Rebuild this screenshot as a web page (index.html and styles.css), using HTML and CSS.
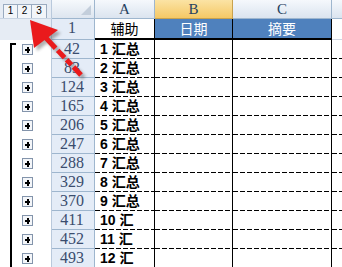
FILE: index.html
```html
<!DOCTYPE html>
<html>
<head>
<meta charset="utf-8">
<link rel="stylesheet" href="styles.css">
</head>
<body>
<div class="sheet">
  <div class="c outline-head">
    <div class="levels"><span class="lv">1</span><span class="lv">2</span><span class="lv">3</span></div>
  </div>
  <div class="c corner"><span class="tri"></span></div>
  <div class="c colhead">A</div>
  <div class="c colhead sel">B</div>
  <div class="c colhead">C</div>
  <div class="c colhead end"></div>

  <div class="c outline-gap"></div>
  <div class="c rowhead">1</div>
  <div class="c title">辅助</div>
  <div class="c title blue">日期</div>
  <div class="c title blue lastcol">摘要</div>
  <div class="c title plain"></div>

  <div class="outline">
    <div class="bracket"></div>
    <div class="btns">
      <span class="slot"><span class="plus"></span></span><span class="slot"><span class="plus"></span></span>
      <span class="slot"><span class="plus"></span></span><span class="slot"><span class="plus"></span></span>
      <span class="slot"><span class="plus"></span></span><span class="slot"><span class="plus"></span></span>
      <span class="slot"><span class="plus"></span></span><span class="slot"><span class="plus"></span></span>
      <span class="slot"><span class="plus"></span></span><span class="slot"><span class="plus"></span></span>
      <span class="slot"><span class="plus"></span></span><span class="slot"><span class="plus"></span></span>
    </div>
  </div>

  <div class="c rowhead">42</div><div class="c cell a">1 汇总</div><div class="c cell b"></div><div class="c cell cc"></div><div class="c cell d"></div>
  <div class="c rowhead">83</div><div class="c cell a">2 汇总</div><div class="c cell b"></div><div class="c cell cc"></div><div class="c cell d"></div>
  <div class="c rowhead">124</div><div class="c cell a">3 汇总</div><div class="c cell b"></div><div class="c cell cc"></div><div class="c cell d"></div>
  <div class="c rowhead">165</div><div class="c cell a">4 汇总</div><div class="c cell b"></div><div class="c cell cc"></div><div class="c cell d"></div>
  <div class="c rowhead">206</div><div class="c cell a">5 汇总</div><div class="c cell b"></div><div class="c cell cc"></div><div class="c cell d"></div>
  <div class="c rowhead">247</div><div class="c cell a">6 汇总</div><div class="c cell b"></div><div class="c cell cc"></div><div class="c cell d"></div>
  <div class="c rowhead">288</div><div class="c cell a">7 汇总</div><div class="c cell b"></div><div class="c cell cc"></div><div class="c cell d"></div>
  <div class="c rowhead">329</div><div class="c cell a">8 汇总</div><div class="c cell b"></div><div class="c cell cc"></div><div class="c cell d"></div>
  <div class="c rowhead">370</div><div class="c cell a">9 汇总</div><div class="c cell b"></div><div class="c cell cc"></div><div class="c cell d"></div>
  <div class="c rowhead">411</div><div class="c cell a">10 汇</div><div class="c cell b"></div><div class="c cell cc"></div><div class="c cell d"></div>
  <div class="c rowhead">452</div><div class="c cell a">11 汇</div><div class="c cell b"></div><div class="c cell cc"></div><div class="c cell d"></div>
  <div class="c rowhead">493</div><div class="c cell a">12 汇</div><div class="c cell b"></div><div class="c cell cc"></div><div class="c cell d"></div>

  <svg class="arrow" width="342" height="267" viewBox="0 0 342 267">
    <defs>
      <filter id="sh" x="-20%" y="-20%" width="140%" height="140%">
        <feGaussianBlur stdDeviation="1.5"/>
      </filter>
    </defs>
    <g transform="translate(3,3)" opacity="0.45" filter="url(#sh)">
      <polygon points="30,20 34,48 58,30" fill="#555"/>
      <line x1="46" y1="38" x2="81" y2="75" stroke="#555" stroke-width="5" stroke-dasharray="14 3 10 3 7 3"/>
    </g>
    <line x1="46" y1="38" x2="81" y2="75" stroke="#ea1a1c" stroke-width="5" stroke-dasharray="14 3 10 3 7 3"/>
    <polygon points="30,20 34,48 58,30" fill="#ea1a1c"/>
  </svg>
</div>
</body>
</html>
```
FILE: styles.css
```css
* { box-sizing: border-box; }
html, body { margin: 0; padding: 0; background: #fff; }
body { width: 342px; height: 267px; overflow: hidden; }

.sheet {
  position: relative;
  display: grid;
  grid-template-columns: 52px 43px 60px 78px 99px 1fr;
  grid-template-rows: 19px 21px repeat(12, 19px);
  width: 342px;
  height: 267px;
  overflow: hidden;
}

.c { overflow: hidden; white-space: nowrap; }

.outline-head {
  background: #e6ecf4;
  border-right: 1px solid #b9c9dc;
  border-bottom: 1px solid #c8d4e3;
  display: flex;
  align-items: flex-start;
  padding: 4px 0 0 3px;
}
.levels { display: flex; border: 1px solid #9aabc0; background: #f2f5f9; }
.lv {
  width: 14px; height: 13px;
  font: 10px/12px "Liberation Sans", sans-serif;
  color: #000;
  text-align: center;
  border-right: 1px solid #9aabc0;
}
.lv:last-child { border-right: none; }

.corner {
  background: linear-gradient(#f6f9fc, #dde5ef);
  border-right: 1px solid #9eb6ce;
  border-bottom: 1px solid #9eb6ce;
  display: flex;
  justify-content: flex-end;
  align-items: flex-end;
  padding: 0 3px 3px 0;
}
.tri {
  width: 0; height: 0;
  border-left: 10px solid transparent;
  border-bottom: 10px solid #c3cedb;
}

.colhead {
  background: linear-gradient(#f5f8fc, #dbe4ef);
  border-right: 1px solid #9eb6ce;
  border-bottom: 1px solid #9eb6ce;
  font: 15px/18px "Liberation Serif", serif;
  color: #27415f;
  text-align: center;
}
.colhead.sel {
  background: linear-gradient(#fbe3a4, #f5c865);
  border-right-color: #c9a24d;
  border-bottom-color: #c9a24d;
}
.colhead.end { border-right: none; }

.outline-gap {
  background: #e6ecf4;
  border-right: 1px solid #b9c9dc;
}

.rowhead {
  background: #e4ecf7;
  border-right: 1px solid #9eb6ce;
  border-bottom: 1px solid #9eb6ce;
  font: 16px/18px "Liberation Serif", serif;
  color: #3a4d6e;
  text-align: center;
  padding-right: 2px;
}

.title {
  font: 14px/19px "Noto Sans CJK SC", sans-serif;
  color: #000;
  text-align: center;
  border-bottom: 2px solid #000;
  border-right: 1px solid #000;
}
.title.blue { background: #4f81bd; color: #fff; }
.title.plain { border-right: none; border-bottom: 1px solid #d0d7e5; }

.outline {
  grid-column: 1;
  grid-row: 3 / span 12;
  display: flex;
  background: #fff;
  border-right: 1px solid #b9c9dc;
}
.bracket {
  margin-left: 10px;
  margin-top: 3px;
  width: 6px;
  border-left: 2px solid #000;
  border-top: 2px solid #000;
}
.btns {
  margin-left: 6px;
  display: flex;
  flex-direction: column;
}
.slot {
  height: 19px;
  display: flex;
  align-items: center;
}
.plus {
  width: 11px;
  height: 11px;
  border: 1px solid #8394ab;
  background:
    linear-gradient(#000, #000) center / 5px 2px no-repeat,
    linear-gradient(#000, #000) center / 2px 6px no-repeat,
    #f4f6f9;
}

.cell {
  background:
    repeating-linear-gradient(90deg, #000 0 5px, transparent 5px 7px) left bottom / 100% 1px no-repeat,
    #fff;
}
.cell.a {
  font: bold 14px/18px "Liberation Sans", "Noto Sans CJK SC", sans-serif;
  color: #000;
  padding-left: 5px;
  border-right: 1px solid #000;
}
.cell.b { border-right: 1px solid #000; }
.cell.cc { border-right: 1px solid #000; }

.arrow {
  position: absolute;
  left: 0;
  top: 0;
  pointer-events: none;
}
```
